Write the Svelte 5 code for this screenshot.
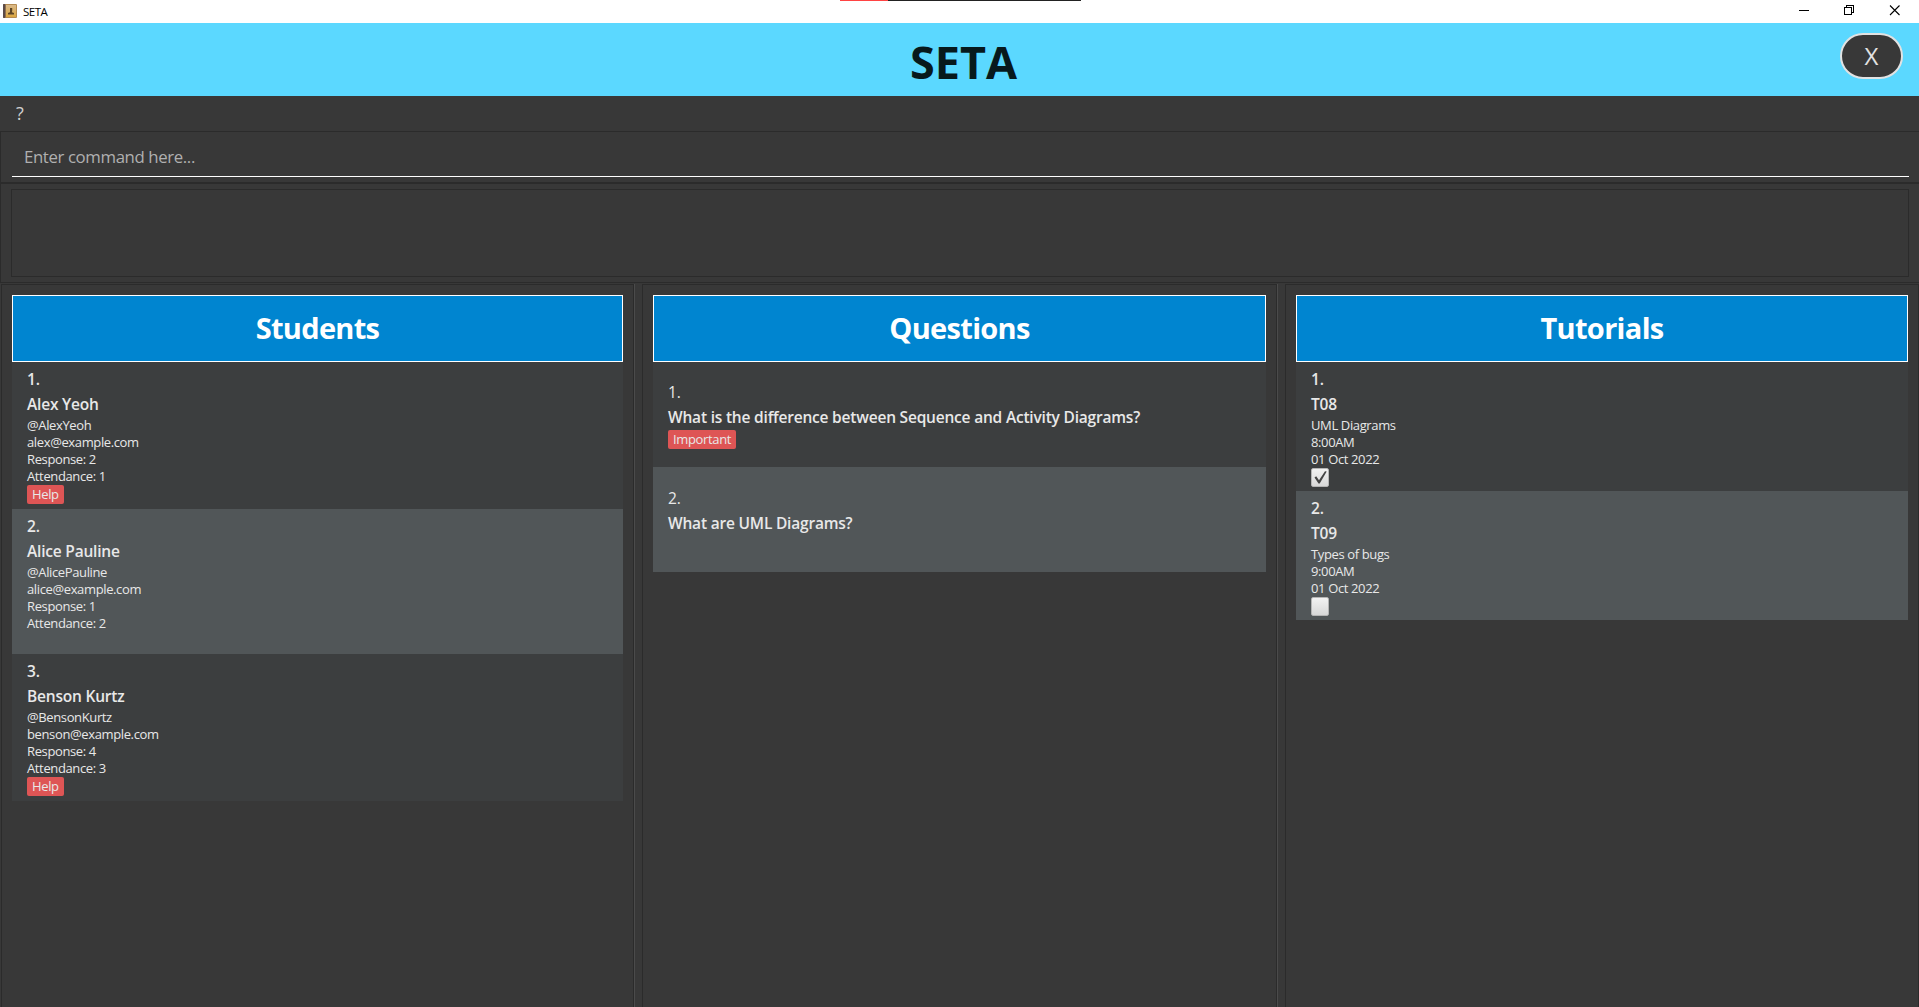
<script>
  const students = [
    { name: 'Alex Yeoh', lines: ['@AlexYeoh', 'alex@example.com', 'Response: 2', 'Attendance: 1'], tag: 'Help' },
    { name: 'Alice Pauline', lines: ['@AlicePauline', 'alice@example.com', 'Response: 1', 'Attendance: 2'], tag: '' },
    { name: 'Benson Kurtz', lines: ['@BensonKurtz', 'benson@example.com', 'Response: 4', 'Attendance: 3'], tag: 'Help' }
  ];
  const questions = [
    { text: 'What is the difference between Sequence and Activity Diagrams?', tag: 'Important' },
    { text: 'What are UML Diagrams?', tag: '' }
  ];
  const tutorials = [
    { name: 'T08', lines: ['UML Diagrams', '8:00AM', '01 Oct 2022'], done: true },
    { name: 'T09', lines: ['Types of bugs', '9:00AM', '01 Oct 2022'], done: false }
  ];
</script>

<div class="app">
  <div class="titlebar">
    <svg class="logo" width="14" height="14" viewBox="0 0 14 14">
      <defs>
        <linearGradient id="book" x1="0" y1="0" x2="0" y2="1">
          <stop offset="0" stop-color="#d9b98a" /><stop offset="1" stop-color="#dba63f" />
        </linearGradient>
      </defs>
      <rect width="14" height="14" rx="1" fill="#b58b50" />
      <rect x="3" y="1" width="10" height="12" fill="url(#book)" />
      <rect width="2.4" height="14" rx="0.8" fill="#5a4a48" />
      <path d="M7 4h2.200v3L8.900 8.200l2.100.8v1.400H5V9l2-.8z" fill="#5c4526" />
    </svg>
    <span class="caption">SETA</span>
    <div class="strip"><i></i></div>
    <svg class="controls" width="110" height="14" viewBox="0 0 110 14" fill="none" stroke="#000" shape-rendering="crispEdges">
      <path d="M0 5.500h10" />
      <path d="M45.500 2.500h7v7h-7zM47.500 2.500v-2h7v7h-2" />
      <path d="M91 0.500l9.500 9.500M100.500 0.500L91 10" shape-rendering="auto" stroke-width="1.100" />
    </svg>
  </div>

  <header class="banner">
    <h1>SETA</h1>
    <button class="close">X</button>
  </header>

  <nav class="menu"><span>?</span></nav>
  <section class="command"><div class="field"><span>Enter command here...</span></div></section>
  <section class="result"><div class="box"></div></section>

  <main class="panels">
    <section class="panel students">
      <h2><span>Students</span></h2>
      {#each students as s, i}
        <article class="row">
          <div class="num">{i + 1}.</div>
          <div class="name">{s.name}</div>
          {#each s.lines as l}<div class="line"><span>{l}</span></div>{/each}
          {#if s.tag}<span class="tag">{s.tag}</span>{/if}
        </article>
      {/each}
    </section>
    <div class="divider"></div>
    <section class="panel questions">
      <h2><span>Questions</span></h2>
      {#each questions as q, i}
        <article class="row">
          <div class="num">{i + 1}.</div>
          <div class="name">{q.text}</div>
          {#if q.tag}<span class="tag">{q.tag}</span>{/if}
        </article>
      {/each}
    </section>
    <div class="divider"></div>
    <section class="panel tutorials">
      <h2><span>Tutorials</span></h2>
      {#each tutorials as t, i}
        <article class="row">
          <div class="num">{i + 1}.</div>
          <div class="name">{t.name}</div>
          {#each t.lines as l}<div class="line"><span>{l}</span></div>{/each}
          <div class="check">
            {#if t.done}
              <svg width="16" height="17" viewBox="0 0 16 17"><path d="M2.500 8.500l1.700-1.200L7 11.200 13 2.300l1.700.2L7.700 14.500H6.500z" fill="#444" /></svg>
            {/if}
          </div>
        </article>
      {/each}
    </section>
  </main>
</div>

<style>
  :global(body) { margin: 0; overflow: hidden; }
  .app {
    width: 1919px; height: 1007px; box-sizing: border-box; overflow: hidden;
    display: flex; flex-direction: column; background: #383838;
    font-family: "Open Sans", "Noto Sans", sans-serif; color: #e8e8e8;
  }
  .app :global(*) { box-sizing: border-box; }
  .titlebar { height: 23px; flex: none; background: #fff; display: flex; align-items: flex-start; position: relative; }
  .logo { margin: 4px 0 0 3px; }
  .caption { margin-left: 6px; font-size: 11.500px; line-height: 23px; color: #000; letter-spacing: -0.500px; }
  .strip { position: absolute; left: 840px; top: 0; width: 241px; height: 1px; background: #222; }
  .strip i { display: block; width: 48px; height: 1px; background: #ff4343; }
  .controls { margin: 5px 10px 0 auto; }
  .banner { height: 73px; flex: none; background: #5bd8ff; position: relative; display: flex; justify-content: center; }
  h1 { margin: 0; padding-left: 8px; font-size: 45px; line-height: 78px; height: 73px; font-weight: 700; color: #07191c; }
  .close {
    position: absolute; right: 16px; top: 10px; width: 63px; height: 46px; padding: 0;
    border: 2px solid #e2e2e2; border-radius: 23px; background: #383838; color: #e2e2e2;
    font: 24px/40px "Open Sans", "Noto Sans", sans-serif;
  }
  .menu { height: 35px; flex: none; padding-left: 16px; font-size: 18px; line-height: 35px; color: #d0d0d0; }
  .command { height: 52px; flex: none; border: 1px solid #2b2b2b; border-right: 0; padding: 0 10px 0 11px; }
  .field {
    height: 45px; border-bottom: 1px solid #fff; padding-left: 12px;
    font-size: 16.800px; line-height: 50px; letter-spacing: -0.380px; color: #b0b0b0;
  }
  .result { height: 100px; flex: none; border: 1px solid #2b2b2b; border-right: 0; padding: 5px 10px 0 10px; }
  .box { height: 88px; border: 1px solid #2b2b2b; }
  .panels { flex: 1; display: flex; padding: 1px 0 0 1px; min-height: 0; }
  .panel { flex: none; border: 1px solid #2b2b2b; border-bottom: 0; padding: 10px 10px 0; }
  .students { width: 633px; }
  .questions { width: 635px; }
  .tutorials { width: 634px; }
  .divider { flex: none; width: 8px; border-left: 1px solid #4b4b4b; }
  h2 {
    margin: 0; height: 67px; border: 1px solid #fff; background: #0085d0; color: #fff; text-align: center;
    font-size: 29px; font-weight: 700; line-height: 64px; letter-spacing: -0.680px;
  }
  .row { background: #3c3e3f; padding: 5px 15px 0; height: 147px; }
  .row:nth-of-type(even) { background: #515658; }
  .students .row:nth-of-type(even) { height: 145px; }
  .questions .row { height: 105px; padding-top: 18px; }
  .questions .row:nth-of-type(even) { padding-top: 19px; }
  .tutorials .row { height: 129px; }
  .num, .name { font-size: 15.500px; line-height: 25px; height: 25px; white-space: nowrap; letter-spacing: -0.200px; }
  .num { font-weight: 600; }
  .questions .num { font-weight: 400; }
  .name { font-weight: 600; }
  .line { font-size: 13px; line-height: 17px; height: 17px; letter-spacing: -0.370px; }
  .tag {
    display: block; width: fit-content; height: 19px; padding: 0 5px; border-radius: 2px;
    background: #de5555; font-size: 13px; line-height: 18px; letter-spacing: -0.350px;
  }
  .check {
    width: 18px; height: 19px; border: 1px solid #b5b5b5; border-radius: 2px;
    background: linear-gradient(#f2f2f2, #d8d8d8);
  }
  .check svg { display: block; }
</style>
